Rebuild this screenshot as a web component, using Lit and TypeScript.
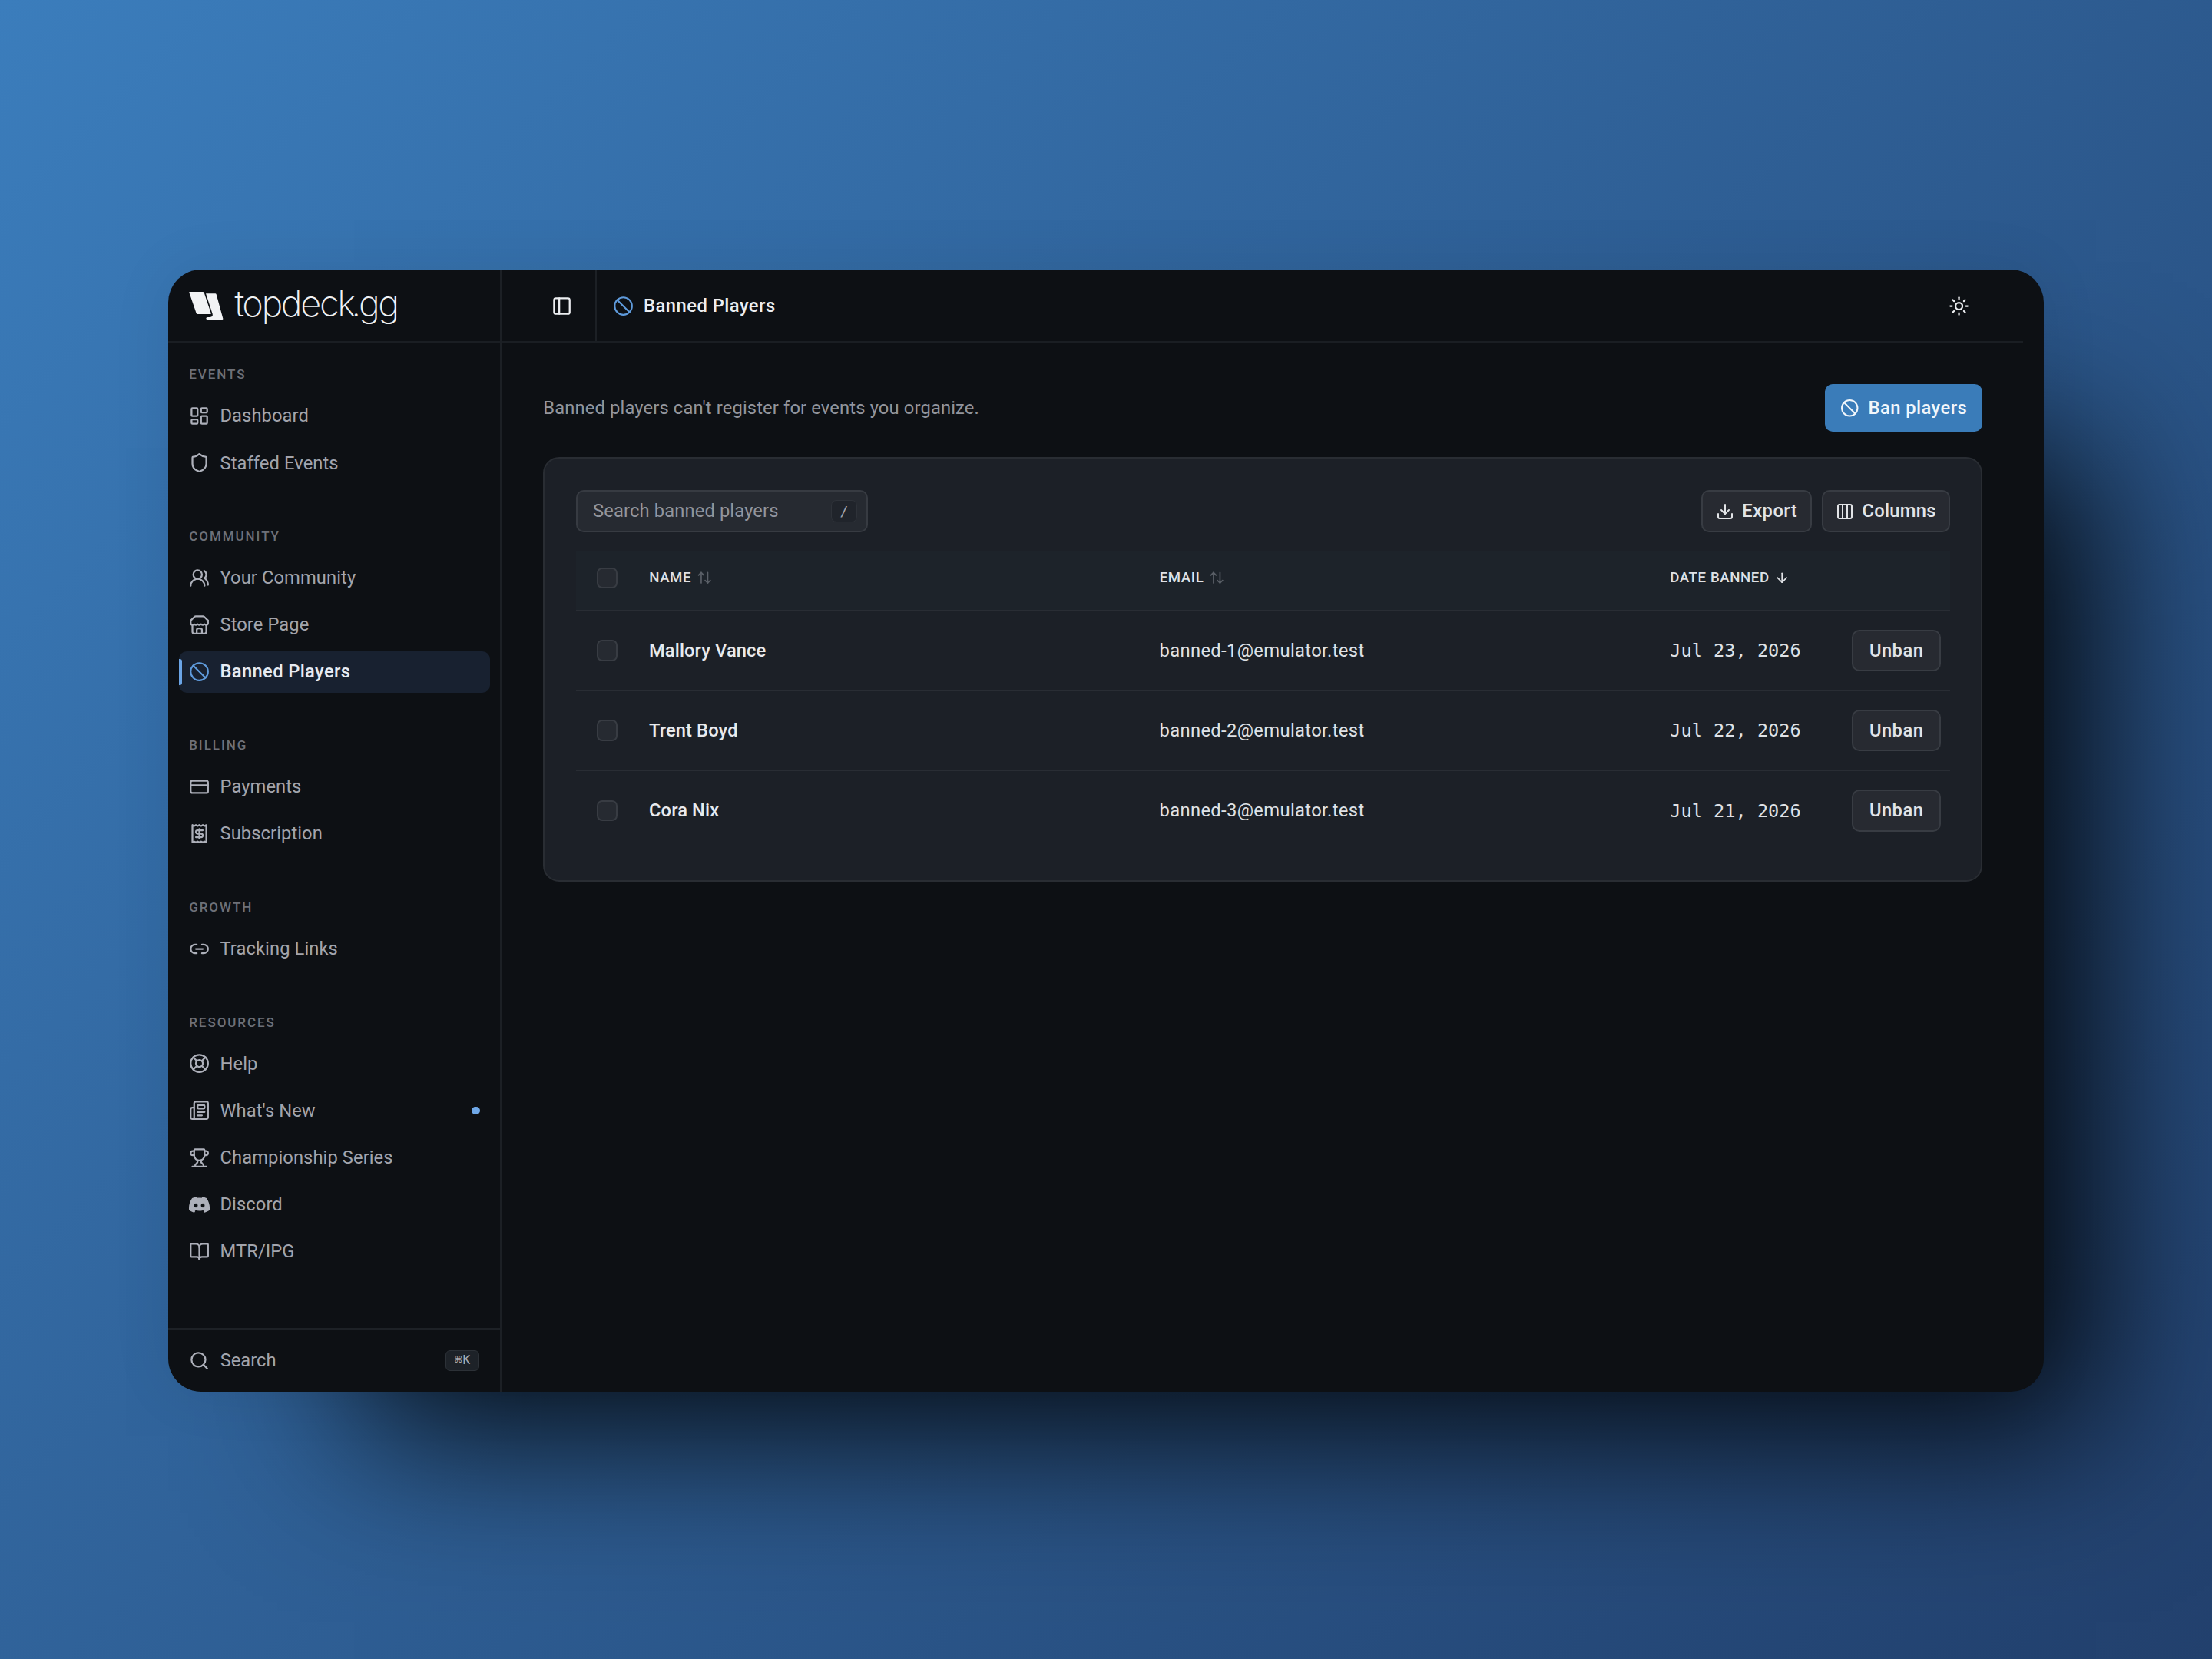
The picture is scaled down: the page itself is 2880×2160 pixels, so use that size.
import { LitElement, html, svg, css, nothing } from "lit";
import { customElement, property } from "lit/decorators.js";
import { classMap } from "lit/directives/class-map.js";

const ICONS: Record<string, unknown> = {
  dashboard: svg`<rect width="7" height="9" x="3" y="3" rx="1"/><rect width="7" height="5" x="14" y="3" rx="1"/><rect width="7" height="9" x="14" y="12" rx="1"/><rect width="7" height="5" x="3" y="16" rx="1"/>`,
  shield: svg`<path d="M20 13c0 5-3.5 7.5-7.66 8.95a1 1 0 0 1-.67-.01C7.5 20.5 4 18 4 13V6a1 1 0 0 1 1-1c2 0 4.5-1.2 6.24-2.72a1.17 1.17 0 0 1 1.52 0C14.51 3.81 17 5 19 5a1 1 0 0 1 1 1z"/>`,
  users: svg`<path d="M18 21a8 8 0 0 0-16 0"/><circle cx="10" cy="8" r="5"/><path d="M22 20c0-3.37-2-6.5-4-8a5 5 0 0 0-.45-8.3"/>`,
  store: svg`<path d="m2 7 4.41-4.41A2 2 0 0 1 7.83 2h8.34a2 2 0 0 1 1.42.59L22 7"/><path d="M4 12v8a2 2 0 0 0 2 2h12a2 2 0 0 0 2-2v-8"/><path d="M15 22v-4a2 2 0 0 0-2-2h-2a2 2 0 0 0-2 2v4"/><path d="M22 7v3a2 2 0 0 1-2 2a2.7 2.7 0 0 1-1.59-.63.7.7 0 0 0-.82 0A2.7 2.7 0 0 1 16 12a2.7 2.7 0 0 1-1.59-.63.7.7 0 0 0-.82 0A2.7 2.7 0 0 1 12 12a2.7 2.7 0 0 1-1.59-.63.7.7 0 0 0-.82 0A2.7 2.7 0 0 1 8 12a2.7 2.7 0 0 1-1.59-.63.7.7 0 0 0-.82 0A2.7 2.7 0 0 1 4 12a2 2 0 0 1-2-2V7"/>`,
  ban: svg`<circle cx="12" cy="12" r="10"/><path d="m4.9 4.9 14.2 14.2"/>`,
  card: svg`<rect width="20" height="14" x="2" y="5" rx="2"/><path d="M2 10h20"/>`,
  receipt: svg`<path d="M4 2v20l2-1 2 1 2-1 2 1 2-1 2 1 2-1 2 1V2l-2 1-2-1-2 1-2-1-2 1-2-1-2 1Z"/><path d="M16 8h-6a2 2 0 1 0 0 4h4a2 2 0 1 1 0 4H8"/><path d="M12 17.5v-11"/>`,
  link: svg`<path d="M9 17H7A5 5 0 0 1 7 7h2"/><path d="M15 7h2a5 5 0 1 1 0 10h-2"/><path d="M8 12h8"/>`,
  help: svg`<circle cx="12" cy="12" r="10"/><path d="m4.93 4.93 4.24 4.24"/><path d="m14.83 9.17 4.24-4.24"/><path d="m14.83 14.83 4.24 4.24"/><path d="m9.17 14.83-4.24 4.24"/><circle cx="12" cy="12" r="4"/>`,
  news: svg`<path d="M15 18h-5"/><path d="M18 14h-8"/><path d="M4 22h16a2 2 0 0 0 2-2V4a2 2 0 0 0-2-2H8a2 2 0 0 0-2 2v16a2 2 0 0 1-4 0v-9a2 2 0 0 1 2-2h2"/><rect width="8" height="4" x="10" y="6" rx="1"/>`,
  trophy: svg`<path d="M10 14.66v1.626a2 2 0 0 1-.976 1.696A5 5 0 0 0 7 21.978"/><path d="M14 14.66v1.626a2 2 0 0 0 .976 1.696A5 5 0 0 1 17 21.978"/><path d="M18 9h1.5a1 1 0 0 0 0-5H18"/><path d="M4 22h16"/><path d="M6 9a6 6 0 0 0 12 0V3a1 1 0 0 0-1-1H7a1 1 0 0 0-1 1z"/><path d="M6 9H4.5a1 1 0 0 1 0-5H6"/>`,
  discord: svg`<path fill="currentColor" stroke="none" d="M20.317 4.3698a19.7913 19.7913 0 00-4.8851-1.5152.0741.0741 0 00-.0785.0371c-.211.3753-.4447.8648-.6083 1.2495-1.8447-.2762-3.68-.2762-5.4868 0-.1636-.3933-.4058-.8742-.6177-1.2495a.077.077 0 00-.0785-.037 19.7363 19.7363 0 00-4.8852 1.515.0699.0699 0 00-.0321.0277C.5334 9.0458-.319 13.5799.0992 18.0578a.0824.0824 0 00.0312.0561c2.0528 1.5076 4.0413 2.4228 5.9929 3.0294a.0777.0777 0 00.0842-.0276c.4616-.6304.8731-1.2952 1.226-1.9942a.076.076 0 00-.0416-.1057c-.6528-.2476-1.2743-.5495-1.8722-.8923a.077.077 0 01-.0076-.1277c.1258-.0943.2517-.1923.3718-.2914a.0743.0743 0 01.0776-.0105c3.9278 1.7933 8.18 1.7933 12.0614 0a.0739.0739 0 01.0785.0095c.1202.099.246.1981.3728.2924a.077.077 0 01-.0066.1276 12.2986 12.2986 0 01-1.873.8914.0766.0766 0 00-.0407.1067c.3604.698.7719 1.3628 1.225 1.9932a.076.076 0 00.0842.0286c1.961-.6067 3.9495-1.5219 6.0023-3.0294a.077.077 0 00.0313-.0552c.5004-5.177-.8382-9.6739-3.5485-13.6604a.061.061 0 00-.0312-.0286zM8.02 15.3312c-1.1825 0-2.1569-1.0857-2.1569-2.419 0-1.3332.9555-2.4189 2.157-2.4189 1.2108 0 2.1757 1.0952 2.1568 2.419 0 1.3332-.9555 2.4189-2.1569 2.4189zm7.9748 0c-1.1825 0-2.1569-1.0857-2.1569-2.419 0-1.3332.9554-2.4189 2.1569-2.4189 1.2108 0 2.1757 1.0952 2.1568 2.419 0 1.3332-.946 2.4189-2.1568 2.4189Z"/>`,
  book: svg`<path d="M12 7v14"/><path d="M3 18a1 1 0 0 1-1-1V4a1 1 0 0 1 1-1h5a4 4 0 0 1 4 4 4 4 0 0 1 4-4h5a1 1 0 0 1 1 1v13a1 1 0 0 1-1 1h-6a3 3 0 0 0-3 3 3 3 0 0 0-3-3z"/>`,
  search: svg`<circle cx="11" cy="11" r="8"/><path d="m21 21-4.3-4.3"/>`,
  panel: svg`<rect width="18" height="18" x="3" y="3" rx="2"/><path d="M9 3v18"/>`,
  sun: svg`<circle cx="12" cy="12" r="4"/><path d="M12 2v2"/><path d="M12 20v2"/><path d="m4.93 4.93 1.41 1.41"/><path d="m17.66 17.66 1.41 1.41"/><path d="M2 12h2"/><path d="M20 12h2"/><path d="m6.34 17.66-1.41 1.41"/><path d="m19.07 4.93-1.41 1.41"/>`,
  download: svg`<path d="M21 15v4a2 2 0 0 1-2 2H5a2 2 0 0 1-2-2v-4"/><path d="m7 10 5 5 5-5"/><path d="M12 15V3"/>`,
  columns: svg`<rect width="18" height="18" x="3" y="3" rx="2"/><path d="M9 3v18"/><path d="M15 3v18"/>`,
  sort: svg`<path d="m21 16-4 4-4-4"/><path d="M17 20V4"/><path d="m3 8 4-4 4 4"/><path d="M7 4v16"/>`,
  down: svg`<path d="M12 5v14"/><path d="m19 12-7 7-7-7"/>`,
};

@customElement("ui-icon")
class UiIcon extends LitElement {
  static styles = css`
    :host { display: block; flex: none; width: var(--icon-size, 27.1px); height: var(--icon-size, 27.1px); }
    svg { display: block; width: 100%; height: 100%; overflow: visible; fill: none; stroke: currentColor; stroke-width: var(--icon-stroke, 2); stroke-linecap: round; stroke-linejoin: round; }
  `;
  @property() name = "";
  render() {
    return html`<svg viewBox="0 0 24 24" aria-hidden="true">${ICONS[this.name]}</svg>`;
  }
}

interface NavItem { icon: string; label: string; active?: boolean; dot?: boolean; }

const NAV: { title: string; items: NavItem[] }[] = [
  { title: "EVENTS", items: [{ icon: "dashboard", label: "Dashboard" }, { icon: "shield", label: "Staffed Events" }] },
  { title: "COMMUNITY", items: [{ icon: "users", label: "Your Community" }, { icon: "store", label: "Store Page" }, { icon: "ban", label: "Banned Players", active: true }] },
  { title: "BILLING", items: [{ icon: "card", label: "Payments" }, { icon: "receipt", label: "Subscription" }] },
  { title: "GROWTH", items: [{ icon: "link", label: "Tracking Links" }] },
  { title: "RESOURCES", items: [{ icon: "help", label: "Help" }, { icon: "news", label: "What's New", dot: true }, { icon: "trophy", label: "Championship Series" }, { icon: "discord", label: "Discord" }, { icon: "book", label: "MTR/IPG" }] },
];

@customElement("app-sidebar")
class AppSidebar extends LitElement {
  static styles = css`
    :host { display: flex; flex-direction: column; box-sizing: border-box; width: 434px; flex: none; border-right: 2px solid #1c2025; color: #a2a4ac; }
    .brand { box-sizing: border-box; height: 95px; flex: none; display: flex; align-items: center; padding: 0 0 2px 27.4px; border-bottom: 2px solid #1a1e23; }
    .mark { width: 45px; height: 36px; display: block; fill: #f2f3f5; margin-top: 2px; }
    .word { font: 200 47px/60px Inter, sans-serif; letter-spacing: -2.4px; color: #f0f1f3; margin: 0 0 4px 14px; white-space: nowrap; }
    .point { margin: 0 -1px 0 -3.4px; }
    nav { flex: 1; padding: 14.3px 12.8px 0 13.6px; display: flex; flex-direction: column; gap: 41.2px; }
    .group { display: flex; flex-direction: column; }
    .title { height: 54.3px; line-height: 54.3px; padding-left: 13.6px; font-size: 17px; font-weight: 500; letter-spacing: 1.95px; color: #6d7078; }
    .items { display: flex; flex-direction: column; gap: 6.8px; }
    .item { position: relative; height: 54.27px; display: flex; align-items: center; gap: 13.2px; padding: 0 13.6px; border-radius: 10px; letter-spacing: 0.08px; white-space: nowrap; }
    ui-icon { color: #adb0ba; }
    .item.active { background: #182130; color: #e6ebf3; font-weight: 500; letter-spacing: 0.36px; }
    .item.active ui-icon { color: #5f9bdc; --icon-stroke: 1.9; }
    .item.active::before { content: ""; position: absolute; left: 0; top: 10px; bottom: 10px; width: 4px; border-radius: 0 3px 3px 0; background: #6ba5e6; }
    .dot { margin-left: auto; width: 10.4px; height: 10.4px; border-radius: 50%; background: #6fa8e8; }
    footer { box-sizing: border-box; height: 83.5px; flex: none; display: flex; align-items: center; gap: 13.2px; padding: 0 27.4px; border-top: 2px solid #1d2126; }
    kbd { box-sizing: border-box; margin-left: auto; width: 44px; height: 27px; display: flex; align-items: center; justify-content: center; padding-bottom: 1px; font: 400 16px/1 "DejaVu Sans Mono", monospace; color: #a9acb3; background: #1d2228; border: 1.5px solid #2c3137; border-radius: 6px; }
    .cmd { font: 11.5px/1 "DejaVu Sans", sans-serif; }
  `;
  render() {
    return html`
      <div class="brand">
        <svg class="mark" viewBox="0 0 135 108" aria-hidden="true">
          <path d="M3 0H54Q58 0 59 3L86 83Q87 87 83 87H33Q30 87 29 84L1 3Q0 0 3 0Z"/>
          <path d="M66 7H103Q106 7 107 10L133 104Q134 108 130 108H71Q67 108 67 103Q68 99 74 99H82Q95 97 92 86Z"/>
        </svg>
        <span class="word">topdeck<span class="point">.</span>gg</span>
      </div>
      <nav>
        ${NAV.map((g) => html`
          <div class="group">
            <div class="title">${g.title}</div>
            <div class="items">
              ${g.items.map((i) => html`
                <div class=${classMap({ item: true, active: !!i.active })}>
                  <ui-icon name=${i.icon}></ui-icon><span>${i.label}</span>
                  ${i.dot ? html`<span class="dot"></span>` : nothing}
                </div>`)}
            </div>
          </div>`)}
      </nav>
      <footer><ui-icon name="search"></ui-icon><span>Search</span><kbd><span class="cmd">⌘</span>K</kbd></footer>
    `;
  }
}

const PLAYERS = [
  { name: "Mallory Vance", email: "banned-1@emulator.test", date: "Jul 23, 2026" },
  { name: "Trent Boyd", email: "banned-2@emulator.test", date: "Jul 22, 2026" },
  { name: "Cora Nix", email: "banned-3@emulator.test", date: "Jul 21, 2026" },
];

@customElement("players-card")
class PlayersCard extends LitElement {
  static styles = css`
    :host { display: block; box-sizing: border-box; height: 553px; padding: 41px 40.7px; background: #1c2027; border: 2px solid #292d33; border-radius: 21px; color: #dfe1e5; }
    .tools { display: flex; align-items: center; gap: 13px; margin-bottom: 24px; }
    .search { box-sizing: border-box; width: 380px; height: 54.5px; display: flex; align-items: center; justify-content: space-between; padding: 0 12px 0 20px; margin-right: auto; background: #262a31; border: 2px solid #373b42; border-radius: 10px; color: #92959d; letter-spacing: 0.13px; }
    .key { box-sizing: border-box; width: 34px; height: 29px; display: flex; align-items: center; justify-content: center; font: 18px/1 "DejaVu Sans Mono", monospace; color: #a5a8af; background: #20242b; border: 1.5px solid #2e3239; border-radius: 7px; }
    .btn { box-sizing: border-box; height: 54.5px; display: flex; align-items: center; justify-content: center; gap: 10px; background: #272a31; border: 2px solid #383c43; border-radius: 10px; font-weight: 500; letter-spacing: 0.5px; color: #e2e4e7; white-space: nowrap; --icon-size: 24px; }
    .export { width: 144.4px; }
    .columns { width: 166.2px; letter-spacing: 0.27px; }
    .row { box-sizing: border-box; height: 103.7px; display: grid; grid-template-columns: 94.5px 664.5px 664.5px 237.7px 116px; align-items: center; border-bottom: 2px solid #292d34; }
    .row:last-child { border-bottom: 0; }
    .row.head { height: 79.5px; padding-bottom: 6px; background: #1d232a; font-size: 18.65px; font-weight: 500; letter-spacing: 0.6px; --icon-size: 20.4px; }
    .head span { display: flex; align-items: center; gap: 6.6px; padding-left: 0.7px; }
    .head ui-icon { color: #5a5f67; }
    .head ui-icon[name="down"] { color: #dfe1e5; }
    .box { box-sizing: border-box; width: 27.5px; height: 27.5px; margin-left: 27px; background: #262a31; border: 2px solid #383c43; border-radius: 7px; }
    .name { font-weight: 500; letter-spacing: 0.1px; color: #e8eaee; padding-left: 0.5px; }
    .email { letter-spacing: 0.36px; padding-left: 0.5px; }
    .date { font-family: "DejaVu Sans Mono", monospace; font-size: 23.6px; padding: 1px 0 0 0.8px; }
  `;
  render() {
    return html`
      <div class="tools">
        <div class="search"><span>Search banned players</span><span class="key">/</span></div>
        <div class="btn export"><ui-icon name="download"></ui-icon>Export</div>
        <div class="btn columns"><ui-icon name="columns"></ui-icon>Columns</div>
      </div>
      <div class="table">
        <div class="row head">
          <div class="box"></div>
          <span>NAME<ui-icon name="sort"></ui-icon></span>
          <span>EMAIL<ui-icon name="sort"></ui-icon></span>
          <span>DATE BANNED<ui-icon name="down"></ui-icon></span>
        </div>
        ${PLAYERS.map((p) => html`
          <div class="row">
            <div class="box"></div>
            <div class="name">${p.name}</div>
            <div class="email">${p.email}</div>
            <div class="date">${p.date}</div>
            <div class="btn">Unban</div>
          </div>`)}
      </div>
    `;
  }
}

@customElement("app-root")
class AppRoot extends LitElement {
  static styles = css`
    :host { display: flex; box-sizing: border-box; width: 2880px; height: 2160px; padding-top: 3px; align-items: center; justify-content: center; overflow: hidden; font: 400 23.74px/1.2 Roboto, "Noto Sans", sans-serif; background: linear-gradient(135deg, #3b7dbc 0%, #22406d 100%); }
    .window { width: 2442px; height: 1461px; display: flex; border-radius: 43px; background: #0d1014; box-shadow: 155px 145px 200px -88px rgba(0, 0, 0, 0.88), 0 0 80px rgba(0, 0, 0, 0.08); }
    app-sidebar { height: 1461px; }
    main { flex: 1; display: flex; flex-direction: column; padding-right: 27px; }
    .top { box-sizing: border-box; height: 95px; flex: none; display: flex; align-items: center; border-bottom: 2px solid #1a1e23; color: #eceef1; }
    .toggle { box-sizing: border-box; width: 124px; height: 93px; display: flex; align-items: center; padding: 2px 0 0 64.5px; border-right: 2px solid #1c2025; }
    .title { flex: 1; display: flex; align-items: center; gap: 13.4px; padding: 2px 0 0 20.6px; font-weight: 500; letter-spacing: 0.48px; }
    .title ui-icon { color: #5f9bdc; --icon-stroke: 1.9; }
    .sun { padding: 2px 70px 0 0; }
    .body { padding: 54px 52.7px 0 54.3px; }
    .intro { display: flex; align-items: center; justify-content: space-between; height: 61.6px; margin-bottom: 33.7px; color: #92959d; letter-spacing: 0.14px; }
    .primary { box-sizing: border-box; width: 205.4px; height: 61.6px; display: flex; align-items: center; justify-content: center; gap: 12px; border-radius: 10px; background: #3a7cb9; color: #f1f6fb; font-weight: 500; letter-spacing: 0.45px; --icon-size: 24.5px; }
  `;
  render() {
    return html`
      <div class="window">
        <app-sidebar></app-sidebar>
        <main>
          <header class="top">
            <div class="toggle"><ui-icon name="panel"></ui-icon></div>
            <div class="title"><ui-icon name="ban"></ui-icon><span>Banned Players</span></div>
            <div class="sun"><ui-icon name="sun"></ui-icon></div>
          </header>
          <section class="body">
            <div class="intro">
              <span>Banned players can't register for events you organize.</span>
              <div class="primary"><ui-icon name="ban"></ui-icon>Ban players</div>
            </div>
            <players-card></players-card>
          </section>
        </main>
      </div>
    `;
  }
}
